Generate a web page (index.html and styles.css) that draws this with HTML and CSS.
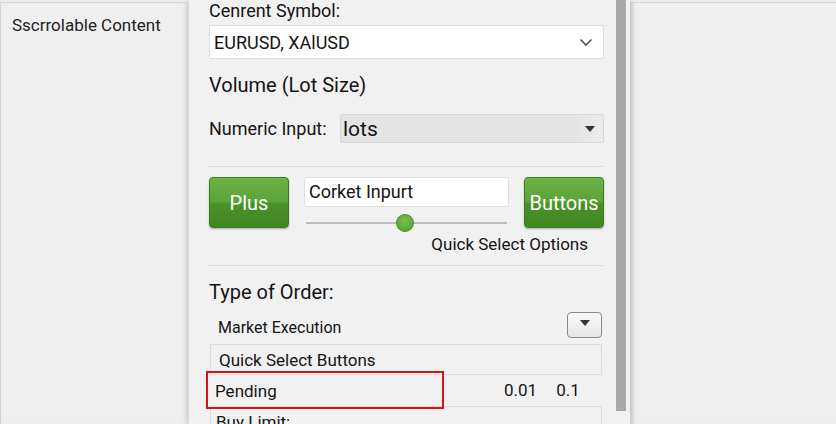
FILE: index.html
```html
<!DOCTYPE html>
<html>
<head>
<meta charset="utf-8">
<link rel="stylesheet" href="styles.css">
</head>
<body>
<div class="app">
  <aside class="pane left-pane">
    <div class="pane-title">Sscrrolable Content</div>
  </aside>
  <main class="panel">
    <div class="content">
      <div class="label">Cenrent Symbol:</div>
      <div class="select white">
        <span>EURUSD, XAlUSD</span>
        <svg class="chev" width="14" height="9" viewBox="0 0 14 9"><path d="M1.5 1.5 L7 7 L12.5 1.5" fill="none" stroke="#555" stroke-width="1.6"/></svg>
      </div>
      <div class="heading vol">Volume (Lot Size)</div>
      <div class="numeric-row">
        <span class="num-label">Numeric Input:</span>
        <div class="select grey">
          <span class="lots">lots</span>
          <span class="tri-cell"><span class="tri"></span></span>
        </div>
      </div>
      <div class="rule r1"></div>
      <div class="button-row">
        <button class="green-btn">Plus</button>
        <div class="mid-col">
          <div class="text-input">Corket Inpurt</div>
          <div class="slider"><div class="track"></div><div class="thumb"></div></div>
          <div class="quick-label">Quick Select Options</div>
        </div>
        <button class="green-btn">Buttons</button>
      </div>
      <div class="rule r2"></div>
      <div class="heading order">Type of Order:</div>
      <div class="market-row">
        <span>Market Execution</span>
        <span class="small-dd"><span class="tri"></span></span>
      </div>
      <div class="box quick-box">Quick Select Buttons</div>
      <div class="pending-row">
        <div class="pending">Pending</div>
        <span class="val v1">0.01</span>
        <span class="val v2">0.1</span>
      </div>
      <div class="box buy-box">Buy Limit:</div>
    </div>
    <div class="scroll-col"><div class="scroll-thumb"></div></div>
  </main>
  <aside class="pane right-pane"></aside>
</div>
</body>
</html>
```

FILE: styles.css
```css
* { box-sizing: border-box; }
html, body { margin: 0; padding: 0; }
body {
  width: 836px; height: 424px; overflow: hidden;
  background: #ececec;
  font-family: Roboto, "Liberation Sans", sans-serif;
  color: #141414;
}
.app { display: flex; height: 424px; }
.pane {
  background: #efefef;
  border-top: 1px solid #d6d6d6;
  margin-top: 2px;
}
.left-pane {
  width: 187px;
  border-left: 1px solid #d4d4d4;
  box-shadow: inset -3px 0 4px -2px rgba(0,0,0,0.08);
}
.pane-title { font-size: 17px; padding: 12px 0 0 11px; color: #222; }
.right-pane {
  flex: 1;
  border-left: 1px solid #dcdcdc;
  box-shadow: inset 4px 0 5px -3px rgba(0,0,0,0.12);
}
.panel {
  width: 441px;
  margin-left: 2px;
  background: #f1f1f1;
  display: flex;
  box-shadow: -2px 0 4px rgba(0,0,0,0.12), 2px 0 4px rgba(0,0,0,0.1);
  overflow: hidden;
  position: relative;
  z-index: 1;
}
.content { width: 415px; padding-left: 20px; display: flex; flex-direction: column; }
.content > * { flex-shrink: 0; }
.scroll-col { width: 26px; padding-left: 12px; }
.scroll-thumb { width: 10px; height: 411px; background: #a8a8a8; }

.label { font-size: 18px; line-height: 22px; height: 22px; }
.select {
  display: flex; align-items: center; justify-content: space-between;
}
.select.white {
  margin-top: 3px; height: 34px; width: 395px;
  background: #fff; border: 1px solid #dcdcdc; border-radius: 2px;
  padding: 0 10px 0 4px; font-size: 18px;
}
.heading { font-size: 20px; line-height: 24px; height: 24px; }
.vol { margin-top: 14px; }
.numeric-row { display: flex; align-items: center; margin-top: 17px; height: 29px; }
.num-label { font-size: 18px; width: 131px; }
.select.grey {
  width: 264px; height: 29px;
  background: #e4e4e4; border: 1px solid #d8d8d8; border-radius: 2px;
  padding-left: 2px;
}
.lots { font-size: 21px; }
.tri-cell {
  width: 26px; height: 27px; display: flex; align-items: center; justify-content: center;
  background: linear-gradient(to right, #e4e4e4, #ececec);
}
.tri {
  width: 0; height: 0;
  border-left: 5px solid transparent; border-right: 5px solid transparent;
  border-top: 6px solid #333;
}
.rule { height: 1px; background: #dadada; width: 395px; }
.r1 { margin-top: 23px; }
.button-row { display: flex; margin-top: 10px; height: 88px; }
.green-btn {
  width: 81px; height: 51px;
  border: 1px solid #3c7d22; border-radius: 4px;
  background: linear-gradient(to bottom, #6db347 0%, #5aa337 48%, #4b9229 52%, #3f8620 100%);
  color: #fff; font-family: Roboto, "Liberation Sans", sans-serif; font-size: 20px;
  box-shadow: 0 1px 2px rgba(0,0,0,0.3);
  padding: 0;
}
.mid-col { width: 235px; padding-left: 15px; display: flex; flex-direction: column; }
.text-input {
  width: 205px; height: 30px; background: #fff;
  border: 1px solid #dedede; border-radius: 2px;
  font-size: 18px; padding: 3px 0 0 4px;
}
.slider { position: relative; height: 32px; width: 205px; }
.track { position: absolute; left: 2px; right: 2px; top: 15px; height: 2px; background: #bdbdbd; }
.thumb {
  position: absolute; left: 92px; top: 7px; width: 18px; height: 18px; border-radius: 50%;
  background: radial-gradient(circle at 45% 35%, #7cc04f, #4f9a2c);
  border: 1px solid #4a8a2a;
}
.quick-label { font-size: 17px; text-align: right; width: 284px; margin-top: -5px; }
.r2 { margin-top: 0; }
.order { margin-top: 14px; }
.market-row {
  margin-top: 8px; height: 26px; width: 393px;
  display: flex; align-items: center; justify-content: space-between;
  font-size: 16px; padding-left: 9px;
}
.market-row span:first-child { padding-top: 4px; }
.small-dd {
  width: 35px; height: 26px; border: 1px solid #8a8a8a; border-radius: 4px;
  background: linear-gradient(#fafafa, #e6e6e6);
  display: flex; align-items: center; justify-content: center;
}
.box {
  width: 392px; border: 1px solid #dcdcdc; font-size: 17px; margin-left: 1px;
}
.quick-box { margin-top: 6px; height: 31px; padding: 5px 0 0 8px; }
.pending-row { display: flex; align-items: center; height: 38px; margin-top: -4px; margin-left: -3px; position: relative; z-index: 1; }
.pending {
  width: 238px; height: 38px; border: 2px solid #d4141c;
  font-size: 17px; padding: 8px 0 0 7px;
}
.val { font-size: 17px; }
.v1 { margin-left: 60px; }
.v2 { margin-left: 19px; }
.buy-box { margin-top: -3px; height: 30px; padding: 5px 0 0 5px; }
```
